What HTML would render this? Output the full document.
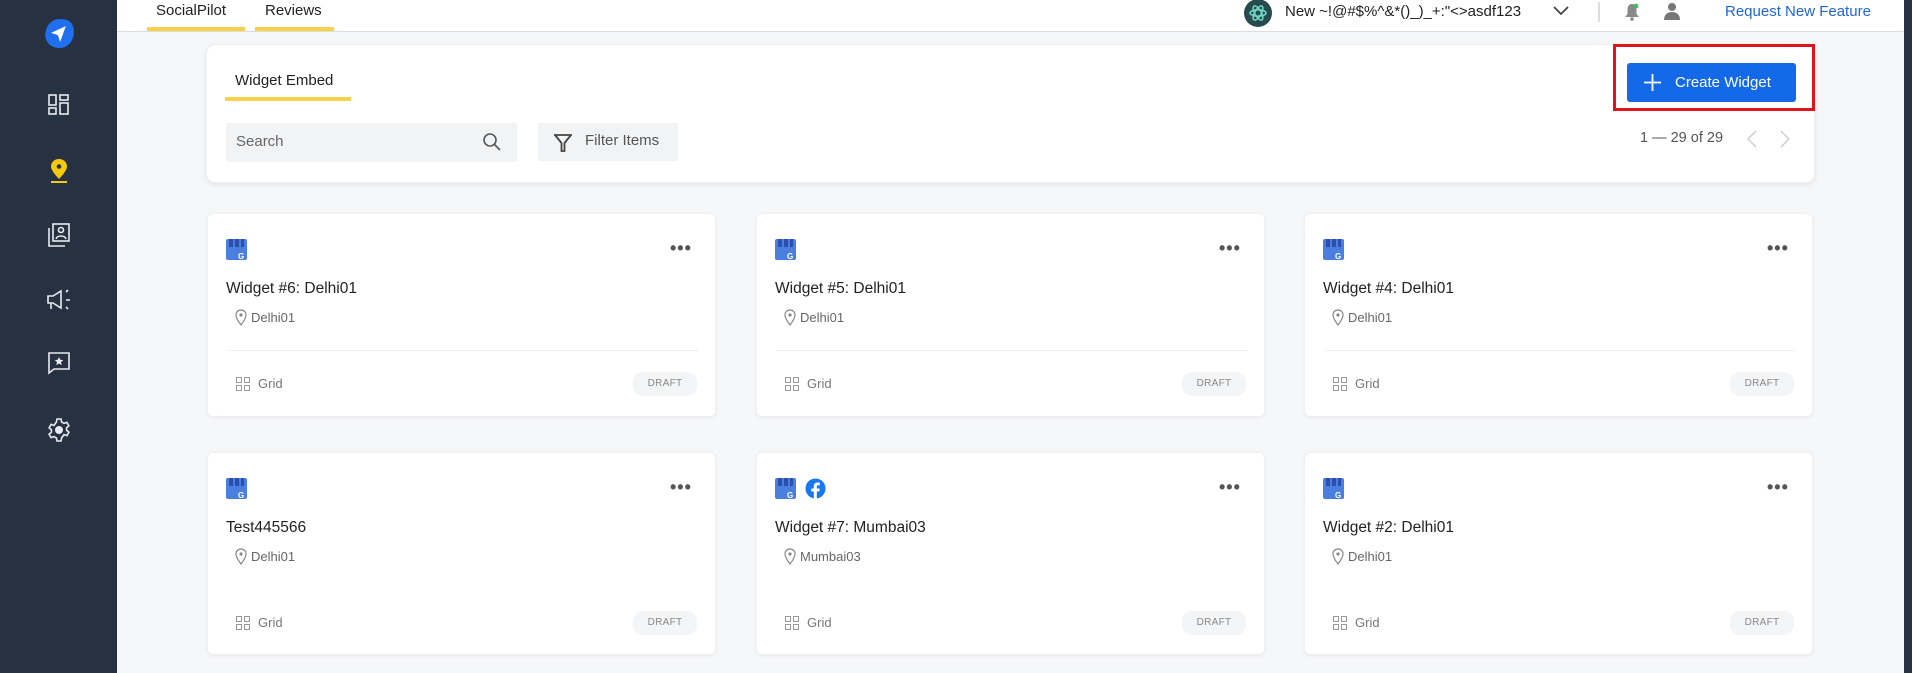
<!DOCTYPE html>
<html><head><meta charset="utf-8"><style>
*{box-sizing:border-box;margin:0;padding:0}
body{width:1912px;height:673px;overflow:hidden;background:#f6f7f9;font-family:"Liberation Sans",sans-serif;position:relative;color:#222}
.abs{position:absolute}
#side{left:0;top:0;width:117px;height:673px;background:#263142}
#sb{left:1904px;top:0;width:8px;height:673px;background:#263142}
#hdr{left:117px;top:0;width:1787px;height:32px;background:#fff;border-bottom:1px solid #dcdcdc}
.tab{font-size:15px;top:2px;color:#222}
.ul{background:#f6d24a;height:4px;top:27px}
.card{background:#fff;border-radius:6px;box-shadow:0 1px 3px rgba(0,0,0,.06);border:1px solid #eef0f2}
.title{font-size:15.5px;color:#222}
.loc{font-size:13px;color:#666}
.gr{font-size:13px;color:#777}
.draft{font-size:10px;color:#888;background:#f4f5f6;border-radius:10px;width:64px;height:24px;line-height:24px;text-align:center;letter-spacing:.3px}
.dots{font-size:18px;color:#555;letter-spacing:1px;font-weight:bold}
</style></head><body>
<div id="side" class="abs"></div>
<div id="sb" class="abs"></div>
<svg class="abs" style="left:42px;top:17px" width="34" height="34" viewBox="0 0 30 30"><path d="M15 2C24 1 29 6 28 15 27 24 20 29 12 27 4 25 1 17 4 10 6 5 10 2 15 2Z" fill="#1f6fee"/><path d="M21 8 8 14l6 2 2 6z" fill="#fff"/></svg>
<svg class="abs" style="left:48px;top:94px" width="22" height="22" viewBox="0 0 22 22" fill="none" stroke="#e8ecf0" stroke-width="1.6"><rect x="1" y="1" width="7" height="10"/><rect x="12" y="1" width="8" height="5"/><rect x="1" y="14" width="7" height="6"/><rect x="12" y="9" width="8" height="11"/></svg>
<svg class="abs" style="left:49px;top:158px" width="20" height="26" viewBox="0 0 20 26"><path d="M10 1C5 1 2 4.5 2 8.5 2 13 10 21 10 21S18 13 18 8.5C18 4.5 15 1 10 1Z" fill="#f6c90e"/><circle cx="10" cy="8.5" r="2.3" fill="#263142"/><rect x="2" y="23" width="16" height="2" fill="#f6c90e"/></svg>
<svg class="abs" style="left:47px;top:222px" width="24" height="26" viewBox="0 0 24 26" fill="none" stroke="#e8ecf0" stroke-width="1.6"><rect x="6" y="2" width="16" height="17"/><path d="M2 6v18h16"/><circle cx="14" cy="8" r="2.5"/><path d="M9 17c1-4 9-4 10 0"/></svg>
<svg class="abs" style="left:46px;top:288px" width="26" height="24" viewBox="0 0 26 24" fill="none" stroke="#e8ecf0" stroke-width="1.6"><path d="M2 8h5l8-5v17l-8-5H2z"/><path d="M5 15v6"/><path d="M20 4l2-2M20 12h4M20 19l2 2"/></svg>
<svg class="abs" style="left:47px;top:351px" width="24" height="24" viewBox="0 0 24 24" fill="none" stroke="#e8ecf0" stroke-width="1.6"><path d="M2 2h20v16H7l-5 4z"/><path d="M12 6l1.3 2.8 3 .3-2.3 2 .7 3L12 12.6 9.3 14.1l.7-3-2.3-2 3-.3z" fill="#e8ecf0" stroke="none"/></svg>
<svg class="abs" style="left:47px;top:418px" width="24" height="24" viewBox="0 0 24 24" fill="none" stroke="#e8ecf0" stroke-width="1.6"><path d="M10 1h4l.6 3 2.4 1.4 2.9-1 2 3.4-2.3 2v2.4l2.3 2-2 3.4-2.9-1L14.6 20 14 23h-4l-.6-3L7 18.6l-2.9 1-2-3.4 2.3-2v-2.4l-2.3-2 2-3.4 2.9 1L9.4 4z"/><circle cx="12" cy="12" r="3.2" fill="#e8ecf0"/></svg>
<div id="hdr" class="abs"></div>
<div class="abs tab" style="left:156px">SocialPilot</div>
<div class="abs ul" style="left:147px;width:98px"></div>
<div class="abs tab" style="left:265px">Reviews</div>
<div class="abs ul" style="left:255px;width:79px"></div>
<svg class="abs" style="left:1244px;top:-1px" width="28" height="28" viewBox="0 0 28 28"><circle cx="14" cy="14" r="14" fill="#274a4f"/><g fill="none" stroke="#6fd3c0" stroke-width="1.6"><ellipse cx="14" cy="14" rx="8" ry="3.2"/><ellipse cx="14" cy="14" rx="8" ry="3.2" transform="rotate(60 14 14)"/><ellipse cx="14" cy="14" rx="8" ry="3.2" transform="rotate(120 14 14)"/></g></svg>
<div class="abs" style="left:1285px;top:3px;font-size:15px;color:#222">New ~!@#$%^&amp;*()_)_+:"&lt;&gt;asdf123</div>
<svg class="abs" style="left:1552px;top:5px" width="18" height="12" viewBox="0 0 18 12"><path d="M2 2l7 7 7-7" fill="none" stroke="#444" stroke-width="1.8"/></svg>
<div class="abs" style="left:1598px;top:2px;width:2px;height:20px;background:#ddd"></div>
<svg class="abs" style="left:1624px;top:3px" width="16" height="18" viewBox="0 0 16 18"><path d="M8 1C4.5 1 3.5 4 3.5 7v4L1 14h14l-2.5-3V7C12.5 4 11.5 1 8 1Z" fill="#888"/><circle cx="8" cy="16" r="1.8" fill="#888"/><circle cx="12" cy="3" r="2.4" fill="#3fbf5f"/></svg>
<svg class="abs" style="left:1664px;top:2px" width="16" height="18" viewBox="0 0 16 18"><circle cx="8" cy="5" r="4" fill="#777"/><path d="M0 18c0-6 4-8 8-8s8 2 8 8z" fill="#777"/></svg>
<div class="abs" style="left:1725px;top:3px;font-size:15px;color:#1f66d6">Request New Feature</div>
<div class="abs card" style="left:206px;top:44px;width:1609px;height:139px;border-radius:9px;box-shadow:0 2px 6px rgba(0,0,0,.08)"></div>
<div class="abs" style="left:235px;top:72px;font-size:15px;color:#222">Widget Embed</div>
<div class="abs" style="left:225px;top:97px;width:126px;height:4px;background:#f6d24a"></div>
<div class="abs" style="left:226px;top:123px;width:291px;height:39px;background:#f2f3f4;border-radius:2px"></div>
<div class="abs" style="left:236px;top:133px;font-size:15px;color:#666">Search</div>
<svg class="abs" style="left:482px;top:132px" width="20" height="20" viewBox="0 0 20 20" fill="none" stroke="#555" stroke-width="1.6"><circle cx="8" cy="8" r="6"/><path d="M12.5 12.5l5.5 5.5"/></svg>
<div class="abs" style="left:538px;top:123px;width:140px;height:38px;background:#f2f3f4;border-radius:2px"></div>
<svg class="abs" style="left:554px;top:133px" width="18" height="20" viewBox="0 0 18 20" fill="none" stroke="#444" stroke-width="1.8"><path d="M1 2h16l-6.5 8v8h-3v-8z"/></svg>
<div class="abs" style="left:585px;top:132px;font-size:15px;color:#555">Filter Items</div>
<div class="abs" style="left:1613px;top:44px;width:202px;height:67px;border:3px solid #e0141c"></div>
<div class="abs" style="left:1627px;top:63px;width:169px;height:39px;background:#1369e8;border-radius:3px;color:#fff;font-size:15px;line-height:39px;padding-left:48px">Create Widget</div>
<svg class="abs" style="left:1643px;top:73px" width="19" height="19" viewBox="0 0 19 19"><path d="M9.5 1v17M1 9.5h17" stroke="#fff" stroke-width="1.8"/></svg>
<div class="abs" style="left:1640px;top:130px;font-size:14.5px;color:#555">1 — 29 of 29</div>
<svg class="abs" style="left:1744px;top:129px" width="50" height="20" viewBox="0 0 50 20" fill="none" stroke="#ccc" stroke-width="1.4"><path d="M12 2L4 10l8 8M37 2l8 8-8 8"/></svg>
<div id="cards"></div>
<script>
var cols=[207,756,1304],rows=[213,452];
var data=[["Widget #6: Delhi01","Delhi01",0],["Widget #5: Delhi01","Delhi01",0],["Widget #4: Delhi01","Delhi01",0],["Test445566","Delhi01",0],["Widget #7: Mumbai03","Mumbai03",1],["Widget #2: Delhi01","Delhi01",0]];
var gmb='<svg width="21" height="21" viewBox="0 0 21 21"><rect width="21" height="21" rx="2" fill="#4a7fe0"/><path d="M3 0h4v8H3zM9 0h4v8H9zM15 0h3v8h-3z" fill="#2c4fae"/><text x="12" y="20" font-size="8" fill="#fff" font-family="Liberation Sans" font-weight="bold">G</text></svg>';
var fb='<svg width="21" height="21" viewBox="0 0 21 21"><circle cx="10.5" cy="10.5" r="10" fill="#1877f2"/><path d="M11.8 21v-7.5h2.5l.4-3h-2.9V8.7c0-.8.3-1.4 1.4-1.4h1.6V4.6c-.3 0-1.2-.1-2.3-.1-2.3 0-3.7 1.4-3.7 3.9v2.1H6.3v3h2.5V21z" fill="#fff"/></svg>';
var h='';
data.forEach(function(d,i){var x=cols[i%3],y=rows[Math.floor(i/3)];
h+='<div class="abs card" style="left:'+x+'px;top:'+y+'px;width:509px;height:'+(i<3?204:203)+'px"></div>';
h+='<div class="abs" style="left:'+(x+19)+'px;top:'+(y+26)+'px">'+gmb+'</div>';
if(d[2])h+='<div class="abs" style="left:'+(x+49)+'px;top:'+(y+26)+'px">'+fb+'</div>';
h+='<div class="abs dots" style="left:'+(x+463)+'px;top:'+(y+25)+'px">•••</div>';
h+='<div class="abs title" style="left:'+(x+19)+'px;top:'+(y+67)+'px">'+d[0]+'</div>';
h+='<svg class="abs" style="left:'+(x+28)+'px;top:'+(y+96)+'px" width="12" height="17" viewBox="0 0 12 17" fill="none" stroke="#888" stroke-width="1.2"><path d="M6 1C3 1 1 3.2 1 6c0 3.5 5 10 5 10s5-6.5 5-10c0-2.8-2-5-5-5z"/><circle cx="6" cy="6" r="1" fill="#888"/></svg>';
h+='<div class="abs loc" style="left:'+(x+44)+'px;top:'+(y+97)+'px">'+d[1]+'</div>';
if(i<3)h+='<div class="abs" style="left:'+(x+21)+'px;top:'+(y+137)+'px;width:470px;height:1px;background:#eeeff1"></div>';
h+='<svg class="abs" style="left:'+(x+29)+'px;top:'+(y+164)+'px" width="14" height="14" viewBox="0 0 14 14" fill="none" stroke="#999" stroke-width="1"><rect x=".5" y=".5" width="5" height="5"/><rect x="8.5" y=".5" width="5" height="5"/><rect x=".5" y="8.5" width="5" height="5"/><rect x="8.5" y="8.5" width="5" height="5"/></svg>';
h+='<div class="abs gr" style="left:'+(x+51)+'px;top:'+(y+163)+'px">Grid</div>';
h+='<div class="abs draft" style="left:'+(x+426)+'px;top:'+(y+159)+'px">DRAFT</div>';
});
document.getElementById('cards').innerHTML=h;
</script>
</body></html>
